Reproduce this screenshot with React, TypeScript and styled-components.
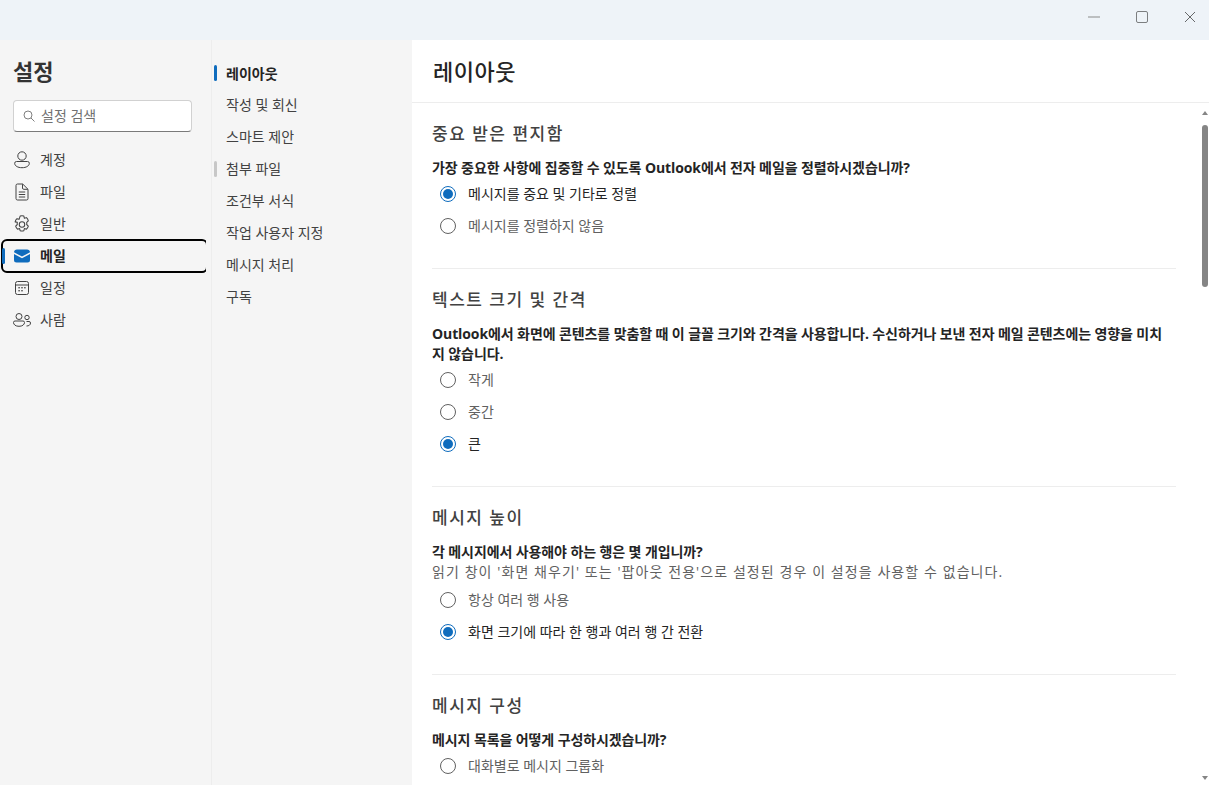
import React from "react";
import styled, { createGlobalStyle } from "styled-components";

const GlobalStyle = createGlobalStyle`
  html, body {
    margin: 0;
    padding: 0;
    height: 100%;
    overflow: hidden;
    background: #fff;
  }
  body {
    font-family: "Open Sans", "Noto Sans CJK KR", sans-serif;
    font-size: 14px;
    color: #242424;
  }
  #root {
    height: 100%;
  }
`;

const stroke = "#424242";

const PersonIcon = () => (
  <svg width="16" height="18" viewBox="0 0 16 18" fill="none" stroke={stroke} strokeWidth="1">
    <circle cx="8" cy="5" r="4.200" />
    <path d="M2.500 10.500h11a1.800 1.800 0 0 1 1.800 1.800c0 2.600-3 4.400-7.300 4.400S.7 14.900.7 12.300a1.800 1.800 0 0 1 1.800-1.800z" />
  </svg>
);

const FileIcon = () => (
  <svg width="16" height="18" viewBox="0 0 16 18" fill="none" stroke={stroke} strokeWidth="1">
    <path d="M3.500 1h5.200L14 6.300V15.500a1.500 1.500 0 0 1-1.500 1.500h-9A1.500 1.500 0 0 1 2 15.500V2.500A1.500 1.500 0 0 1 3.500 1z" />
    <path d="M8.500 1.200V5a1.300 1.300 0 0 0 1.300 1.300h4" />
    <path d="M4.800 9h6.400M4.800 11.500h6.400M4.800 14h6.400" />
  </svg>
);

const GearIcon = () => (
  <svg width="18" height="19" viewBox="1.200 0.300 15.600 17.400" fill="none" stroke={stroke} strokeWidth="0.950" strokeLinejoin="round">
    <circle cx="9" cy="9" r="2.500" />
    <path d="M7.300 1.300c1.100-.3 2.300-.3 3.400 0l.5 2 1.900-.6c.8.800 1.400 1.800 1.700 2.900l-1.500 1.400a5 5 0 0 1 0 2l1.500 1.400c-.3 1.100-.9 2.100-1.700 2.900l-1.900-.6-.5 2c-1.100.3-2.300.3-3.400 0l-.5-2-1.900.6c-.8-.8-1.400-1.800-1.700-2.900l1.500-1.400a5 5 0 0 1 0-2L2.700 6.600C3 5.500 3.600 4.500 4.400 3.700l1.900.6z" />
  </svg>
);

const MailIcon = () => (
  <svg width="16" height="14" viewBox="0 0 16 14">
    <path d="M0 3.200A3 3 0 0 1 3 .5h10a3 3 0 0 1 3 2.700L8 7.600z" fill="#0f6cbd" />
    <path d="M0 5v6a2.500 2.500 0 0 0 2.500 2.500h11A2.500 2.500 0 0 0 16 11V5L8 9.300z" fill="#0f6cbd" />
  </svg>
);

const CalendarIcon = () => (
  <svg width="16" height="16" viewBox="0 0 16 16" fill="none" stroke={stroke} strokeWidth="1">
    <rect x="1.500" y="1.500" width="13" height="13" rx="2" />
    <path d="M1.500 5h13" />
    <g fill={stroke} stroke="none">
      <rect x="4.400" y="7" width="1.400" height="1.400" />
      <rect x="7.300" y="7" width="1.400" height="1.400" />
      <rect x="10.200" y="7" width="1.400" height="1.400" />
      <rect x="4.400" y="10" width="1.400" height="1.400" />
      <rect x="7.300" y="10" width="1.400" height="1.400" />
    </g>
  </svg>
);

const PeopleIcon = () => (
  <svg width="18" height="14" viewBox="0 0 18 14" fill="none" stroke={stroke} strokeWidth="1">
    <circle cx="6" cy="3.500" r="3" />
    <path d="M2 8h8a1.500 1.500 0 0 1 1.500 1.500c0 2.200-2.200 3.800-5.500 3.800S.5 11.700.5 9.500A1.500 1.500 0 0 1 2 8z" />
    <circle cx="14" cy="4.500" r="2.200" />
    <path d="M13.500 13c2.400 0 4-1.100 4-3a1.500 1.500 0 0 0-1.500-1.500h-2.500" />
  </svg>
);

const SearchIcon = () => (
  <svg width="12" height="12" viewBox="0 0 12 12" fill="none" stroke="#707070" strokeWidth="0.900">
    <circle cx="5" cy="5" r="4" />
    <path d="M8 8l3.500 3.500" />
  </svg>
);

const navItems = [
  { label: "계정", icon: <PersonIcon /> },
  { label: "파일", icon: <FileIcon /> },
  { label: "일반", icon: <GearIcon /> },
  { label: "메일", icon: <MailIcon />, active: true },
  { label: "일정", icon: <CalendarIcon /> },
  { label: "사람", icon: <PeopleIcon /> },
];

const subItems = [
  { label: "레이아웃", mark: "active" },
  { label: "작성 및 회신" },
  { label: "스마트 제안" },
  { label: "첨부 파일", mark: "hover" },
  { label: "조건부 서식" },
  { label: "작업 사용자 지정" },
  { label: "메시지 처리" },
  { label: "구독" },
];

type RadioOption = { label: string; checked?: boolean };

const sections: { title: string; question: string; hint?: string; options: RadioOption[] }[] = [
  {
    title: "중요 받은 편지함",
    question: "가장 중요한 사항에 집중할 수 있도록 Outlook에서 전자 메일을 정렬하시겠습니까?",
    options: [{ label: "메시지를 중요 및 기타로 정렬", checked: true }, { label: "메시지를 정렬하지 않음" }],
  },
  {
    title: "텍스트 크기 및 간격",
    question:
      "Outlook에서 화면에 콘텐츠를 맞춤할 때 이 글꼴 크기와 간격을 사용합니다. 수신하거나 보낸 전자 메일 콘텐츠에는 영향을 미치지 않습니다.",
    options: [{ label: "작게" }, { label: "중간" }, { label: "큰", checked: true }],
  },
  {
    title: "메시지 높이",
    question: "각 메시지에서 사용해야 하는 행은 몇 개입니까?",
    hint: "읽기 창이 '화면 채우기' 또는 '팝아웃 전용'으로 설정된 경우 이 설정을 사용할 수 없습니다.",
    options: [{ label: "항상 여러 행 사용" }, { label: "화면 크기에 따라 한 행과 여러 행 간 전환", checked: true }],
  },
  {
    title: "메시지 구성",
    question: "메시지 목록을 어떻게 구성하시겠습니까?",
    options: [{ label: "대화별로 메시지 그룹화" }],
  },
];

export default function App() {
  return (
    <>
      <GlobalStyle />
      <Shell>
        <TitleBar>
          <WindowButton>
            <svg width="12" height="12" viewBox="0 0 12 12">
              <path d="M0 6h12" stroke="#a6a8aa" strokeWidth="1.400" />
            </svg>
          </WindowButton>
          <WindowButton>
            <svg width="12" height="12" viewBox="0 0 12 12" fill="none">
              <rect x=".5" y=".5" width="11" height="11" rx="1.500" stroke="#7c7e80" />
            </svg>
          </WindowButton>
          <WindowButton>
            <svg width="12" height="12" viewBox="0 0 12 12" fill="none">
              <path d="M1 1l10 10M11 1L1 11" stroke="#66686a" />
            </svg>
          </WindowButton>
        </TitleBar>
        <Body>
          <SidePane>
            <PaneTitle>설정</PaneTitle>
            <SearchBox>
              <SearchIcon />
              <SearchText>설정 검색</SearchText>
            </SearchBox>
            <NavList>
              {navItems.map((item) => (
                <NavRow key={item.label} $active={item.active}>
                  {item.active && <NavMark />}
                  <NavIcon>{item.icon}</NavIcon>
                  <NavText>{item.label}</NavText>
                </NavRow>
              ))}
            </NavList>
          </SidePane>
          <SubPane>
            {subItems.map((item) => (
              <SubRow key={item.label} $active={item.mark === "active"}>
                <SubMark $mark={item.mark} />
                <SubText $active={item.mark === "active"}>{item.label}</SubText>
              </SubRow>
            ))}
          </SubPane>
          <Main>
            <MainHeader>레이아웃</MainHeader>
            <ScrollArea>
              <Content>
                {sections.map((section) => (
                  <Section key={section.title}>
                    <SectionTitle>{section.title}</SectionTitle>
                    <Question>{section.question}</Question>
                    {section.hint && <Hint>{section.hint}</Hint>}
                    {section.options.map((option) => (
                      <RadioRow key={option.label}>
                        <RadioCircle $checked={option.checked} />
                        <RadioLabel $checked={option.checked}>{option.label}</RadioLabel>
                      </RadioRow>
                    ))}
                  </Section>
                ))}
              </Content>
              <ScrollTrack>
                <ScrollArrow />
                <ScrollThumb />
                <ScrollArrow $down />
              </ScrollTrack>
            </ScrollArea>
          </Main>
        </Body>
      </Shell>
    </>
  );
}

const Shell = styled.div`
  display: flex;
  flex-direction: column;
  height: 785px;
  overflow: hidden;
`;

const TitleBar = styled.div`
  flex: 0 0 40px;
  display: flex;
  justify-content: flex-end;
  padding-right: 1px;
  background: #eef3f8;
  overflow: hidden;
`;

const WindowButton = styled.div`
  flex: 0 0 48px;
  height: 34px;
  display: flex;
  align-items: center;
  justify-content: center;
  transform: translateX(6px);
`;

const Body = styled.div`
  flex: 1;
  display: flex;
  min-height: 0;
`;

const SidePane = styled.div`
  flex: 0 0 212px;
  box-sizing: border-box;
  background: #f5f5f5;
  border-right: 1px solid #ededed;
  padding-top: 14px;
`;

const PaneTitle = styled.div`
  font-size: 22px;
  font-weight: 700;
  line-height: 34px;
  color: #333;
  padding-left: 13px;
`;

const SearchBox = styled.div`
  box-sizing: border-box;
  width: 179px;
  height: 32px;
  margin: 12px 0 12px 13px;
  padding: 0 0 1px 9px;
  display: flex;
  align-items: center;
  gap: 6px;
  background: #fff;
  border: 1px solid #d1d1d1;
  border-bottom-color: #7a7a7a;
  border-radius: 4px;
`;

const SearchText = styled.span`
  font-size: 14px;
  color: #707070;
  margin-bottom: 1px;
`;

const NavList = styled.div`
  width: 206px;
  display: flex;
  flex-direction: column;
  overflow: hidden;
`;

const NavText = styled.span`
  margin-bottom: 2px;
`;

const NavRow = styled.div<{ $active?: boolean }>`
  position: relative;
  height: 32px;
  margin: 0 -1px 0 2px;
  display: flex;
  align-items: center;
  padding-left: 10px;
  gap: 8px;
  font-size: 14px;
  font-weight: ${(props) => (props.$active ? 700 : 400)};
  color: ${(props) => (props.$active ? "#242424" : "#424242")};
  border-radius: 5px;
  outline: ${(props) => (props.$active ? "2px solid #000" : "none")};
  outline-offset: -1px;
`;

const NavMark = styled.span`
  position: absolute;
  left: 0;
  top: 8px;
  width: 3px;
  height: 16px;
  background: #0f6cbd;
  border-radius: 2px;
`;

const NavIcon = styled.span`
  width: 20px;
  display: flex;
  justify-content: center;
`;

const SubPane = styled.div`
  flex: 0 0 200px;
  box-sizing: border-box;
  background: #f5f5f5;
  padding: 17px 0 0 2px;
`;

const SubText = styled.span<{ $active?: boolean }>`
  margin-bottom: ${(props) => (props.$active ? 1 : 2)}px;
`;

const SubRow = styled.div<{ $active?: boolean }>`
  position: relative;
  height: 32px;
  display: flex;
  align-items: center;
  padding-left: 12px;
  font-size: 14px;
  font-weight: ${(props) => (props.$active ? 700 : 400)};
  color: ${(props) => (props.$active ? "#242424" : "#424242")};
`;

const SubMark = styled.span<{ $mark?: string }>`
  position: absolute;
  left: 0;
  top: 8px;
  width: 3px;
  height: 16px;
  border-radius: 2px;
  background: ${(props) =>
    props.$mark === "active" ? "#0f6cbd" : props.$mark === "hover" ? "#c7c7c7" : "transparent"};
`;

const Main = styled.div`
  flex: 1;
  min-width: 0;
  display: flex;
  flex-direction: column;
  background: #fff;
`;

const MainHeader = styled.div`
  flex: 0 0 63px;
  box-sizing: border-box;
  border-bottom: 1px solid #ededed;
  padding: 16px 0 0 21px;
  font-size: 22px;
  font-weight: 500;
  line-height: 30px;
  letter-spacing: 0.5px;
  color: #242424;
`;

const ScrollArea = styled.div`
  flex: 1;
  min-height: 0;
  display: flex;
  overflow: hidden;
`;

const Content = styled.div`
  flex: 1;
  min-width: 0;
  padding: 0 20px 0 20px;
  overflow: hidden;
`;

const Section = styled.div`
  padding: 17px 0 26px;
  border-bottom: 1px solid #ededed;

  &:last-child {
    border-bottom: none;
  }
`;

const SectionTitle = styled.div`
  font-size: 17px;
  font-weight: 500;
  line-height: 28px;
  letter-spacing: 1.500px;
  color: #424242;
  margin-bottom: 10px;
`;

const Question = styled.div`
  font-size: 14px;
  font-weight: 700;
  line-height: 20px;
  letter-spacing: -0.1px;
  color: #242424;
  padding-right: 3px;
  word-break: break-all;
`;

const Hint = styled.div`
  font-size: 14px;
  line-height: 20px;
  margin-bottom: 2px;
  letter-spacing: 1.080px;
  color: #616161;
`;

const RadioRow = styled.div`
  height: 32px;
  display: flex;
  align-items: center;
  padding-left: 8px;
  gap: 12px;
`;

const RadioCircle = styled.span<{ $checked?: boolean }>`
  box-sizing: border-box;
  width: 16px;
  height: 16px;
  border-radius: 50%;
  border: 1px solid ${(props) => (props.$checked ? "#0f6cbd" : "#616161")};
  display: flex;
  align-items: center;
  justify-content: center;

  &::after {
    content: "";
    width: 10px;
    height: 10px;
    border-radius: 50%;
    background: ${(props) => (props.$checked ? "#0f6cbd" : "transparent")};
  }
`;

const RadioLabel = styled.span<{ $checked?: boolean }>`
  font-size: 14px;
  line-height: 20px;
  margin-bottom: 1px;
  color: ${(props) => (props.$checked ? "#242424" : "#616161")};
`;

const ScrollTrack = styled.div`
  flex: 0 0 13px;
  box-sizing: border-box;
  display: flex;
  flex-direction: column;
  align-items: flex-end;
  padding: 8px 1px 5px 0;
`;

const ScrollThumb = styled.div`
  width: 6px;
  height: 162px;
  margin: 10px 0 auto;
  background: #858585;
  border-radius: 3px;
`;

const ScrollArrow = styled.div<{ $down?: boolean }>`
  width: 0;
  height: 0;
  border-left: 3px solid transparent;
  border-right: 3px solid transparent;
  ${(props) => (props.$down ? "border-top: 4px solid #858585;" : "border-bottom: 4px solid #858585;")}
`;
